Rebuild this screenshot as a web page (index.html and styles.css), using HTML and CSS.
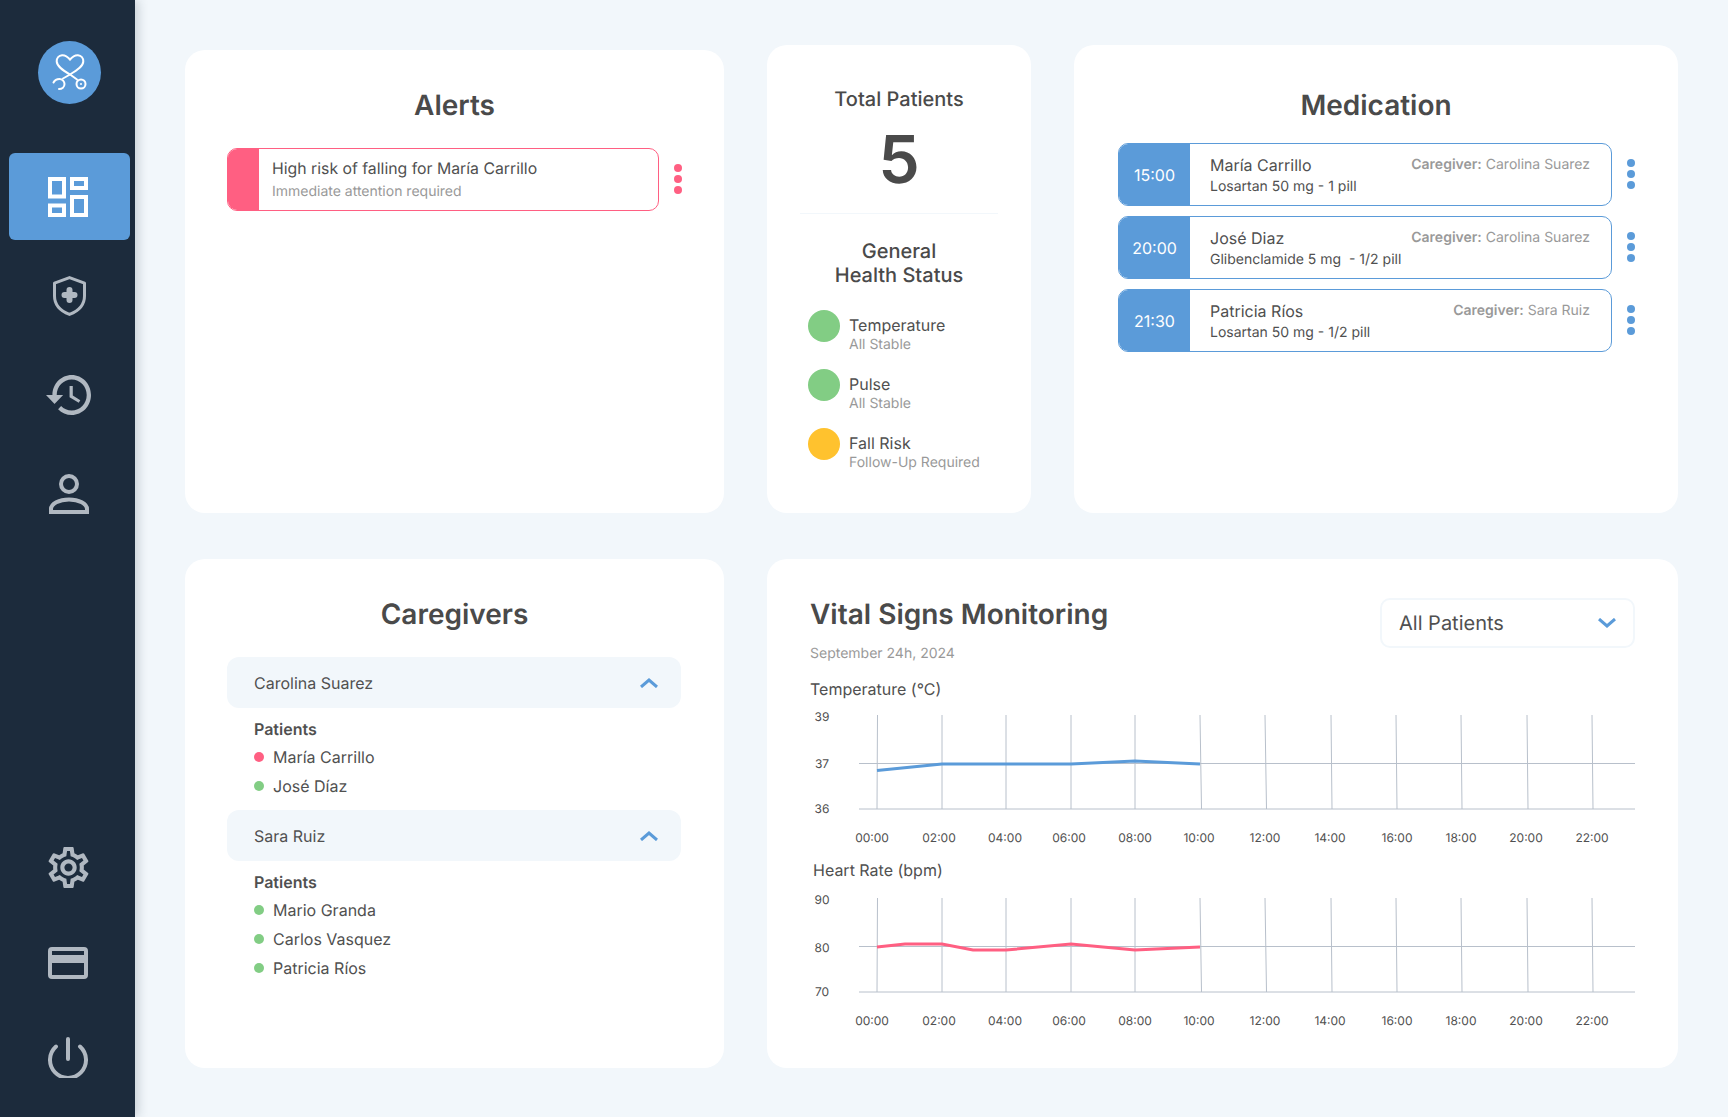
FILE: index.html
```html
<!DOCTYPE html>
<html lang="en">
<head>
    <meta charset="UTF-8">
    <meta name="viewport" content="width=device-width, initial-scale=1.0">
    <title>Dashboard</title>
    <link rel="stylesheet" href="styles.css">
</head>
<body>

    <aside class="sidebar">
        <div class="logo">
            <svg width="63" height="63" viewBox="0 0 63 63" fill="none" stroke="#fff" stroke-width="2" stroke-linecap="round">
                <path d="M32 18.500c-2.500-3-5.500-4.500-8-4.300-3.200.2-5.300 3-5.300 6 0 5 6 9 13.800 13.600l6.500 4.700"/>
                <path d="M32 18.500c2.500-3 5.500-4.500 8-4.300 3.200.2 5.300 3 5.300 6 0 5-6 9-13.300 13.300l-7 4"/>
                <path d="M15.500 41.500c1-2 3-3.500 6-3.500 3 0 5 2.500 5 5 0 3-2.500 5-5.500 5"/>
                <circle cx="43" cy="43" r="4.500"/>
                <circle cx="43" cy="43" r="1" fill="#fff" stroke="none"/>
            </svg>
        </div>

        <nav class="nav">
            <a class="nav-item active" href="#">
                <svg class="icon-grid" width="40" height="40" viewBox="0 0 40 40" fill="none" stroke="#fff" stroke-width="4">
                    <rect x="2" y="2" width="14" height="17.500"/>
                    <rect x="2" y="28.500" width="14" height="9.500"/>
                    <rect x="24" y="2" width="14" height="9"/>
                    <rect x="24" y="20" width="14" height="18"/>
                </svg>
            </a>
            <a class="nav-item" href="#">
                <svg class="icon-shield" width="33" height="40" viewBox="0 0 33 40" fill="none" stroke="#b0b8c1">
                    <path stroke-width="3" stroke-linejoin="round" d="M16.500 1.600 31.500 7.200V20c0 8.500-6 15-15 18.400C7.500 35 1.500 28.500 1.500 20V7.200z"/>
                    <path stroke-width="6" stroke-linecap="round" d="M16.500 14v10M11.500 19h10"/>
                </svg>
            </a>
            <a class="nav-item" href="#">
                <svg class="icon-history" width="45" height="40" viewBox="1 3 21 18" preserveAspectRatio="none" fill="#b0b8c1">
                    <path d="M13 3c-4.970 0-9 4.030-9 9H1l3.890 3.890.07.140L9 12H6c0-3.870 3.130-7 7-7s7 3.130 7 7-3.130 7-7 7c-1.930 0-3.680-.790-4.940-2.060l-1.420 1.420C8.270 19.990 10.510 21 13 21c4.970 0 9-4.030 9-9s-4.030-9-9-9zm-1 5v5l4.280 2.540.720-1.210-3.500-2.080V8H12z"/>
                </svg>
            </a>
            <a class="nav-item" href="#">
                <svg class="icon-person" width="40" height="40" viewBox="0 0 40 40" fill="none" stroke="#b0b8c1" stroke-width="4">
                    <circle cx="20" cy="10" r="8"/>
                    <path d="M2 38v-3c0-5 8-9.600 18-9.600s18 4.600 18 9.600v3z"/>
                </svg>
            </a>
        </nav>

        <nav class="nav nav-bottom">
            <a class="nav-item" href="#">
                <svg width="41" height="41" viewBox="2 2 20 20" fill="#b0b8c1">
                    <path d="M19.430 12.980c.040-.320.070-.640.070-.980 0-.340-.030-.660-.070-.980l2.110-1.650c.190-.150.240-.420.120-.640l-2-3.460c-.090-.160-.260-.250-.440-.250-.060 0-.120.010-.170.030l-2.490 1c-.520-.400-1.080-.730-1.690-.980l-.380-2.650C14.460 2.180 14.250 2 14 2h-4c-.250 0-.460.180-.490.420l-.380 2.650c-.610.250-1.170.590-1.690.980l-2.490-1c-.060-.020-.120-.030-.180-.030-.170 0-.340.090-.430.250l-2 3.460c-.130.220-.070.490.120.640l2.110 1.650c-.040.320-.070.650-.070.980 0 .330.030.660.070.980l-2.110 1.650c-.190.150-.240.420-.120.640l2 3.460c.090.160.260.250.440.250.060 0 .120-.010.170-.030l2.490-1c.520.400 1.080.730 1.690.980l.380 2.650c.030.240.240.420.490.420h4c.250 0 .460-.180.490-.420l.380-2.650c.610-.250 1.170-.590 1.690-.980l2.490 1c.060.020.120.030.180.030.170 0 .340-.090.430-.250l2-3.460c.120-.220.070-.490-.120-.640l-2.110-1.650zm-1.980-1.710c.040.310.050.520.050.730 0 .210-.020.430-.050.730l-.140 1.130.890.700 1.080.840-.700 1.210-1.270-.510-1.040-.420-.900.680c-.430.320-.840.560-1.250.730l-1.060.43-.160 1.130-.200 1.350h-1.400l-.190-1.350-.160-1.130-1.060-.43c-.430-.180-.830-.410-1.230-.710l-.910-.700-1.060.43-1.270.510-.700-1.210 1.080-.84.890-.700-.140-1.130c-.030-.310-.050-.540-.050-.740s.020-.430.050-.730l.140-1.130-.89-.700-1.080-.84.700-1.210 1.270.510 1.040.42.900-.68c.43-.32.840-.56 1.250-.73l1.060-.43.16-1.130.20-1.350h1.390l.19 1.350.16 1.13 1.06.43c.43.18.83.41 1.23.71l.91.70 1.06-.43 1.27-.51.70 1.21-1.07.85-.89.70.14 1.13zM12 8c-2.210 0-4 1.790-4 4s1.790 4 4 4 4-1.790 4-4-1.790-4-4-4zm0 6c-1.100 0-2-.900-2-2s.900-2 2-2 2 .900 2 2-.900 2-2 2z"/>
                </svg>
            </a>
            <a class="nav-item" href="#">
                <svg width="40" height="32" viewBox="0 0 40 32">
                    <rect x="2" y="2" width="36" height="28" rx="2" fill="none" stroke="#b0b8c1" stroke-width="4"/>
                    <rect x="2" y="8" width="36" height="8" fill="#b0b8c1"/>
                </svg>
            </a>
            <a class="nav-item" href="#">
                <svg width="40" height="41" viewBox="0 0 40 41" fill="none" stroke="#b0b8c1" stroke-width="4" stroke-linecap="round">
                    <path d="M20 2v20"/>
                    <path d="M32 9.500a18 18 0 1 1-24 0"/>
                </svg>
            </a>
        </nav>
    </aside>

    <main class="dashboard">

        <section class="card alerts">
            <h2>Alerts</h2>
            <div class="row-line">
                <div class="alert-box">
                    <div class="alert-bar"></div>
                    <div class="alert-text">
                        <div class="alert-title">High risk of falling for María Carrillo</div>
                        <div class="alert-sub">Immediate attention required</div>
                    </div>
                </div>
                <div class="dots dots-red"><span></span><span></span><span></span></div>
            </div>
        </section>

        <section class="card summary">
            <h3>Total Patients</h3>
            <div class="total">5</div>
            <hr class="divider">
            <h3 class="health-title">General<br>Health Status</h3>
            <div class="status-list">
                <div class="status">
                    <span class="status-dot green"></span>
                    <div class="status-text"><div class="status-name">Temperature</div><div class="status-sub">All Stable</div></div>
                </div>
                <div class="status">
                    <span class="status-dot green"></span>
                    <div class="status-text"><div class="status-name">Pulse</div><div class="status-sub">All Stable</div></div>
                </div>
                <div class="status">
                    <span class="status-dot yellow"></span>
                    <div class="status-text"><div class="status-name">Fall Risk</div><div class="status-sub">Follow-Up Required</div></div>
                </div>
            </div>
        </section>

        <section class="card medication">
            <h2>Medication</h2>
            <div class="med-list">
                <div class="row-line">
                    <div class="med-box">
                        <div class="med-time">15:00</div>
                        <div class="med-body">
                            <div class="med-top"><span class="med-name">María Carrillo</span><span class="med-care"><b>Caregiver:</b> Carolina Suarez</span></div>
                            <div class="med-dose">Losartan 50 mg - 1 pill</div>
                        </div>
                    </div>
                    <div class="dots"><span></span><span></span><span></span></div>
                </div>
                <div class="row-line">
                    <div class="med-box">
                        <div class="med-time">20:00</div>
                        <div class="med-body">
                            <div class="med-top"><span class="med-name">José Diaz</span><span class="med-care"><b>Caregiver:</b> Carolina Suarez</span></div>
                            <div class="med-dose">Glibenclamide 5 mg &nbsp;- 1/2 pill</div>
                        </div>
                    </div>
                    <div class="dots"><span></span><span></span><span></span></div>
                </div>
                <div class="row-line">
                    <div class="med-box">
                        <div class="med-time">21:30</div>
                        <div class="med-body">
                            <div class="med-top"><span class="med-name">Patricia Ríos</span><span class="med-care"><b>Caregiver:</b> Sara Ruiz</span></div>
                            <div class="med-dose">Losartan 50 mg - 1/2 pill</div>
                        </div>
                    </div>
                    <div class="dots"><span></span><span></span><span></span></div>
                </div>
            </div>
        </section>

        <section class="card caregivers">
            <h2>Caregivers</h2>
            <div class="acc-head">
                <span>Carolina Suarez</span>
                <svg width="18" height="10" viewBox="0 0 18 10" fill="none" stroke="#5b9bd9" stroke-width="3"><path d="M1 9l8-7 8 7"/></svg>
            </div>
            <div class="acc-body">
                <div class="acc-label">Patients</div>
                <ul class="patients">
                    <li><span class="mini-dot red"></span>María Carrillo</li>
                    <li><span class="mini-dot green"></span>José Díaz</li>
                </ul>
            </div>
            <div class="acc-head">
                <span>Sara Ruiz</span>
                <svg width="18" height="10" viewBox="0 0 18 10" fill="none" stroke="#5b9bd9" stroke-width="3"><path d="M1 9l8-7 8 7"/></svg>
            </div>
            <div class="acc-body">
                <div class="acc-label">Patients</div>
                <ul class="patients">
                    <li><span class="mini-dot green"></span>Mario Granda</li>
                    <li><span class="mini-dot green"></span>Carlos Vasquez</li>
                    <li><span class="mini-dot green"></span>Patricia Ríos</li>
                </ul>
            </div>
        </section>

        <section class="card vitals">
            <div class="vitals-head">
                <div>
                    <h2>Vital Signs Monitoring</h2>
                    <div class="vitals-date">September 24h, 2024</div>
                </div>
                <div class="select">
                    <span>All Patients</span>
                    <svg width="18" height="10" viewBox="0 0 18 10" fill="none" stroke="#5b9bd9" stroke-width="3"><path d="M1 1l8 7 8-7"/></svg>
                </div>
            </div>

            <div class="chart-label">Temperature (°C)</div>
            <svg class="chart" width="825" height="140" viewBox="0 0 825 140">
                <path class="grid" d="M67.500 9 67 103M132 9v94M196 9v94M261 9v94M325 9v94M390 9l1.500 94M455 9l1.500 94M521 9l1 94M586 9l1 94M651 9l1 94M717 9l1 94M782 9l1 94M49 57.500h776M49 103h776"/>
                <polyline class="line-blue" points="67,64.500 132,58 261,58 325,55 390,58"/>
                <g class="axis">
                    <text x="12" y="14.500" text-anchor="middle">39</text>
                    <text x="12" y="61.500" text-anchor="middle">37</text>
                    <text x="12" y="106.500" text-anchor="middle">36</text>
                    <text x="62" y="135.500" text-anchor="middle">00:00</text>
                    <text x="129" y="135.500" text-anchor="middle">02:00</text>
                    <text x="195" y="135.500" text-anchor="middle">04:00</text>
                    <text x="259" y="135.500" text-anchor="middle">06:00</text>
                    <text x="325" y="135.500" text-anchor="middle">08:00</text>
                    <text x="389" y="135.500" text-anchor="middle">10:00</text>
                    <text x="455" y="135.500" text-anchor="middle">12:00</text>
                    <text x="520" y="135.500" text-anchor="middle">14:00</text>
                    <text x="587" y="135.500" text-anchor="middle">16:00</text>
                    <text x="651" y="135.500" text-anchor="middle">18:00</text>
                    <text x="716" y="135.500" text-anchor="middle">20:00</text>
                    <text x="782" y="135.500" text-anchor="middle">22:00</text>
                </g>
            </svg>

            <div class="chart-label chart-label-hr">Heart Rate (bpm)</div>
            <svg class="chart" width="825" height="140" viewBox="0 0 825 140">
                <path class="grid" d="M67.500 9 67 103M132 9v94M196 9v94M261 9v94M325 9v94M390 9l1.500 94M455 9l1.500 94M521 9l1 94M586 9l1 94M651 9l1 94M717 9l1 94M782 9l1 94M49 57.500h776M49 103h776"/>
                <polyline class="line-red" points="67,58 95,55 132,55 163,61 196,61 261,55 325,61 390,58"/>
                <g class="axis">
                    <text x="12" y="14.500" text-anchor="middle">90</text>
                    <text x="12" y="62.500" text-anchor="middle">80</text>
                    <text x="12" y="106.500" text-anchor="middle">70</text>
                    <text x="62" y="135.500" text-anchor="middle">00:00</text>
                    <text x="129" y="135.500" text-anchor="middle">02:00</text>
                    <text x="195" y="135.500" text-anchor="middle">04:00</text>
                    <text x="259" y="135.500" text-anchor="middle">06:00</text>
                    <text x="325" y="135.500" text-anchor="middle">08:00</text>
                    <text x="389" y="135.500" text-anchor="middle">10:00</text>
                    <text x="455" y="135.500" text-anchor="middle">12:00</text>
                    <text x="520" y="135.500" text-anchor="middle">14:00</text>
                    <text x="587" y="135.500" text-anchor="middle">16:00</text>
                    <text x="651" y="135.500" text-anchor="middle">18:00</text>
                    <text x="716" y="135.500" text-anchor="middle">20:00</text>
                    <text x="782" y="135.500" text-anchor="middle">22:00</text>
                </g>
            </svg>
        </section>

    </main>

</body>
</html>
```

FILE: styles.css
```css
* {
    margin: 0;
    padding: 0;
    box-sizing: border-box;
}

body {
    font-family: 'Inter', 'Noto Sans', sans-serif;
    background: #f2f7fb;
    color: #505050;
    display: flex;
    height: 100vh;
    overflow: hidden;
    text-rendering: geometricPrecision;
}

/* sidebar */

.sidebar {
    width: 135px;
    height: 100vh;
    flex-shrink: 0;
    background: #1c2b3c;
    box-shadow: 3px 0 10px rgba(28, 43, 60, 0.2);
    display: flex;
    flex-direction: column;
    padding: 41px 5px 16px 9px;
}

.logo {
    width: 63px;
    height: 63px;
    border-radius: 50%;
    background: #5b9bd9;
    margin: 0 0 49px 29px;
}

.logo svg {
    display: block;
}

.nav {
    display: flex;
    flex-direction: column;
    gap: 12px;
}

.nav-bottom {
    margin-top: auto;
    gap: 8px;
}

.nav-item {
    height: 87px;
    border-radius: 6px;
    display: flex;
    align-items: center;
    justify-content: center;
}

.nav-item.active {
    background: #5b9bd9;
}

.nav-bottom .nav-item {
    padding-right: 3px;
}

.icon-grid {
    margin-right: 3px;
}

.icon-history {
    margin-right: 2px;
}

.icon-person {
    margin-right: 1px;
}

/* cards */

.dashboard {
    flex: 1;
    display: grid;
    grid-template-columns: 539px 264px 604px;
    grid-template-rows: 468px 509px;
    column-gap: 43px;
    row-gap: 46px;
    padding: 45px 0 0 50px;
}

.card {
    background: #fff;
    border-radius: 20px;
}

h2 {
    font-size: 28px;
    line-height: 34px;
    font-weight: 600;
    text-align: center;
    color: #4a4a4a;
}

h3 {
    font-size: 20px;
    line-height: 24px;
    font-weight: 500;
    text-align: center;
    color: #4a4a4a;
}

.row-line {
    display: flex;
    align-items: center;
    gap: 15px;
}

.dots {
    display: flex;
    flex-direction: column;
    gap: 3px;
    margin-bottom: 2px;
}

.dots span {
    width: 8px;
    height: 8px;
    border-radius: 50%;
    background: #5b9bd9;
}

.dots-red span {
    background: #ff5f82;
}

/* alerts */

.alerts {
    margin-top: 5px;
    padding: 38px 0 0 42px;
}

.alerts h2 {
    padding-right: 42px;
}

.alerts .row-line {
    margin-top: 26px;
}

.alert-box {
    width: 432px;
    height: 63px;
    border: 1px solid #ff5f82;
    border-radius: 10px;
    overflow: hidden;
    display: flex;
}

.alert-bar {
    width: 31px;
    background: #ff5f82;
}

.alert-text {
    padding: 10px 0 0 13px;
}

.alert-title {
    font-size: 15.8px;
    line-height: 20px;
}

.alert-sub {
    font-size: 14px;
    line-height: 18px;
    margin-top: 4px;
    color: #999;
}

/* total patients + health status */

.summary {
    padding-top: 42px;
}

.total {
    font-size: 66px;
    line-height: 66px;
    font-weight: 600;
    text-align: center;
    margin-top: 15px;
    color: #4a4a4a;
}

.divider {
    border: 0;
    border-top: 1px solid #f2f7fb;
    margin: 21px 33px 0;
}

.health-title {
    margin-top: 25px;
}

.status-list {
    display: flex;
    flex-direction: column;
    gap: 16px;
    margin-top: 23px;
    padding-left: 41px;
}

.status {
    display: flex;
    gap: 9px;
    height: 43px;
}

.status-dot {
    width: 32px;
    height: 32px;
    border-radius: 50%;
}

.status-dot.green {
    background: #82cd84;
}

.status-dot.yellow {
    background: #ffc22e;
}

.status-text {
    margin-top: 5px;
}

.status-name {
    font-size: 16px;
    line-height: 20px;
}

.status-sub {
    font-size: 14px;
    line-height: 18px;
    margin-top: 1px;
    color: #999;
}

/* medication */

.medication {
    padding: 43px 0 0 44px;
}

.medication h2 {
    padding-right: 44px;
}

.med-list {
    display: flex;
    flex-direction: column;
    gap: 10px;
    margin-top: 21px;
}

.med-box {
    width: 494px;
    height: 63px;
    border: 1px solid #5b9bd9;
    border-radius: 10px;
    overflow: hidden;
    display: flex;
}

.med-time {
    width: 71px;
    background: #5b9bd9;
    color: #fff;
    font-size: 16px;
    display: flex;
    align-items: center;
    justify-content: center;
}

.med-body {
    flex: 1;
    padding: 10px 21px 0 20px;
}

.med-top {
    display: flex;
    justify-content: space-between;
    align-items: center;
}

.med-name {
    font-size: 16px;
    line-height: 20px;
}

.med-care {
    font-size: 14px;
    line-height: 20px;
    padding-top: 1px;
    color: #999;
}

.med-care b {
    font-weight: 600;
}

.med-dose {
    font-size: 14px;
    line-height: 18px;
    margin-top: 3px;
}

/* caregivers */

.caregivers {
    padding: 38px 0 0 42px;
}

.caregivers h2 {
    margin-bottom: 26px;
    padding-right: 42px;
}

.acc-head {
    width: 454px;
    height: 51px;
    background: #f2f7fb;
    border-radius: 12px;
    display: flex;
    align-items: center;
    justify-content: space-between;
    padding: 0 23px 0 27px;
    font-size: 16px;
}

.acc-body {
    padding: 11px 0 14px 27px;
}

.acc-label {
    font-size: 16px;
    line-height: 20px;
    font-weight: 600;
}

.patients {
    list-style: none;
    display: flex;
    flex-direction: column;
    gap: 9px;
    margin-top: 8px;
}

.patients li {
    font-size: 16px;
    line-height: 20px;
    display: flex;
    align-items: center;
    gap: 9px;
}

.mini-dot {
    width: 10px;
    height: 10px;
    border-radius: 50%;
}

.mini-dot.red {
    background: #ff5f82;
}

.mini-dot.green {
    background: #82cd84;
}

/* vitals */

.vitals {
    grid-column: 2 / 4;
    padding: 38px 43px 0;
}

.vitals-head {
    display: flex;
    justify-content: space-between;
    align-items: flex-start;
}

.vitals-head h2 {
    text-align: left;
}

.vitals-date {
    font-size: 14px;
    line-height: 17px;
    color: #999;
    margin-top: 14px;
}

.select {
    width: 255px;
    height: 50px;
    margin-top: 1px;
    border: 2px solid #f2f7fb;
    border-radius: 10px;
    display: flex;
    align-items: center;
    justify-content: space-between;
    padding: 0 17px;
    font-size: 20px;
}

.chart-label {
    font-size: 16px;
    line-height: 20px;
    margin-top: 17px;
}

.chart-label-hr {
    margin: 14px 0 0 3px;
}

.chart {
    display: block;
    margin-top: 7px;
}

.chart-label-hr + .chart {
    margin-top: 9px;
}

.grid {
    fill: none;
    stroke: #b8c0cb;
    stroke-width: 1;
}

.line-blue,
.line-red {
    fill: none;
    stroke-width: 3;
}

.line-blue {
    stroke: #5b9bd9;
}

.line-red {
    stroke: #ff5f82;
}

.axis text {
    font-size: 12px;
    fill: #505050;
}
```
